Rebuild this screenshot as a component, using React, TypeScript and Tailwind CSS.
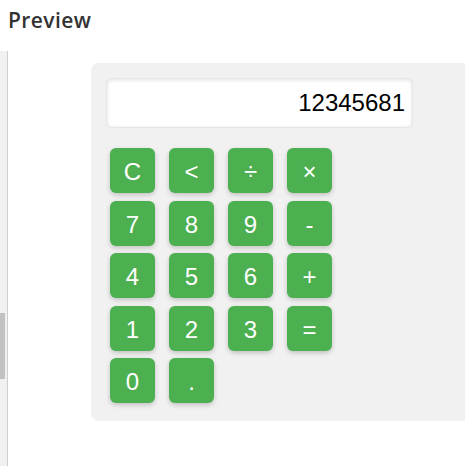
const keys = ['C', '<', '÷', '×', '7', '8', '9', '-', '4', '5', '6', '+', '1', '2', '3', '=', '0', '.']

export default function App() {
	return (
		<div className="w-[465px] h-[466px] overflow-hidden bg-white">
			<div className="h-[51px] pl-2 pt-[4px]">
				<h2 className="text-[21px] leading-[32px] font-semibold tracking-[0.4px] text-[#333] font-['Open_Sans',sans-serif]">
					Preview
				</h2>
			</div>
			<div className="flex h-[415px]">
				<div className="relative w-2 shrink-0 bg-[#f1f1f1] border-r border-[#cfcfcf]">
					<div className="absolute left-0 top-[262px] w-[5px] h-[66px] bg-[#c1c1c1]" />
				</div>
				<div className="flex-1 pl-[83px] pt-[12px]">
					<div className="w-[420px] rounded-lg bg-[#f1f1f1] pt-[15px] pl-[15px] pb-[18px] font-['Liberation_Sans',Arial,sans-serif]">
						<div className="w-[307px] h-[50px] flex items-center justify-end pr-[7px] bg-white rounded-[5px] border border-[#e6e6e6] shadow-[inset_0_1px_4px_rgba(0,0,0,0.12)] text-[24px] text-black">
							12345681
						</div>
						<div className="mt-[20px] ml-[4px] grid grid-cols-[repeat(4,45px)] gap-x-[14px] gap-y-[7.5px]">
							{keys.map((k) => (
								<button
									key={k}
									className="w-[45px] h-[45px] rounded-[6px] bg-[#4caf50] text-white text-[24px] leading-none flex items-center justify-center pt-[3px] shadow-[0_2px_5px_rgba(0,0,0,0.2)]"
								>
									{k}
								</button>
							))}
						</div>
					</div>
				</div>
			</div>
		</div>
	)
}
